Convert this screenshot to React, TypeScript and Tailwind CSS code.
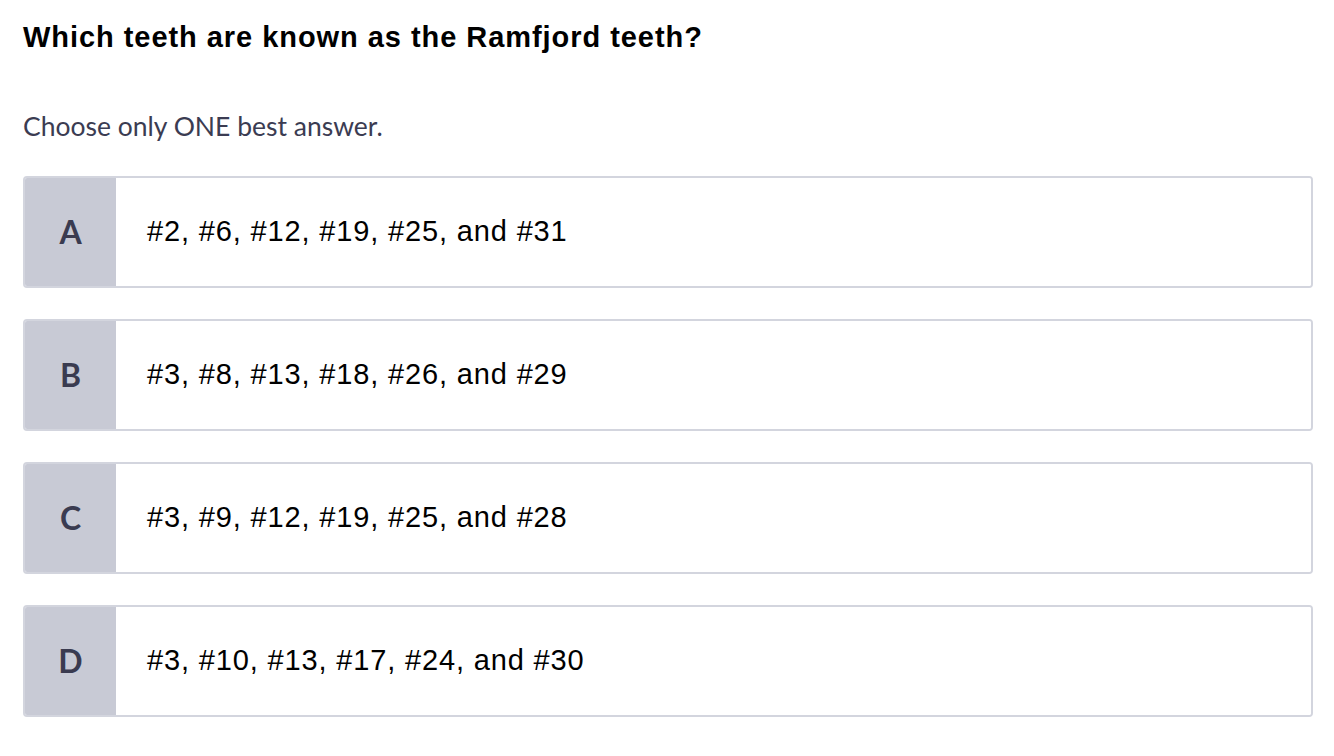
import React from "react";

const options = [
  { letter: "A", text: "#2, #6, #12, #19, #25, and #31" },
  { letter: "B", text: "#3, #8, #13, #18, #26, and #29" },
  { letter: "C", text: "#3, #9, #12, #19, #25, and #28" },
  { letter: "D", text: "#3, #10, #13, #17, #24, and #30" },
];

export default function App() {
  return (
    <div className="w-[1334px] h-[756px] bg-white px-[23px] pt-[19px] overflow-hidden">
      <h1 className="text-[29px] leading-[36px] tracking-[0.95px] font-bold text-black font-['Liberation_Sans',Arial,sans-serif]">
        Which teeth are known as the Ramfjord teeth?
      </h1>
      <p className="mt-[53px] text-[26.5px] leading-[36px] text-[#3b3c52] font-['Lato',sans-serif]">
        Choose only ONE best answer.
      </p>
      <div className="mt-[32px] flex flex-col gap-[31px] w-[1290px]">
        {options.map((o) => (
          <div
            key={o.letter}
            className="flex h-[112px] rounded-[4px] border-2 border-[#d3d5de] overflow-hidden"
          >
            <div className="w-[91px] bg-[#c8cad5] flex items-center justify-center text-[32px] font-bold text-[#3a3b50] font-['Lato',sans-serif]">
              {o.letter}
            </div>
            <div className="flex-1 bg-white flex items-center pl-[31px] text-[29px] tracking-[0.85px] text-black font-['Liberation_Sans',Arial,sans-serif]">
              {o.text}
            </div>
          </div>
        ))}
      </div>
    </div>
  );
}
